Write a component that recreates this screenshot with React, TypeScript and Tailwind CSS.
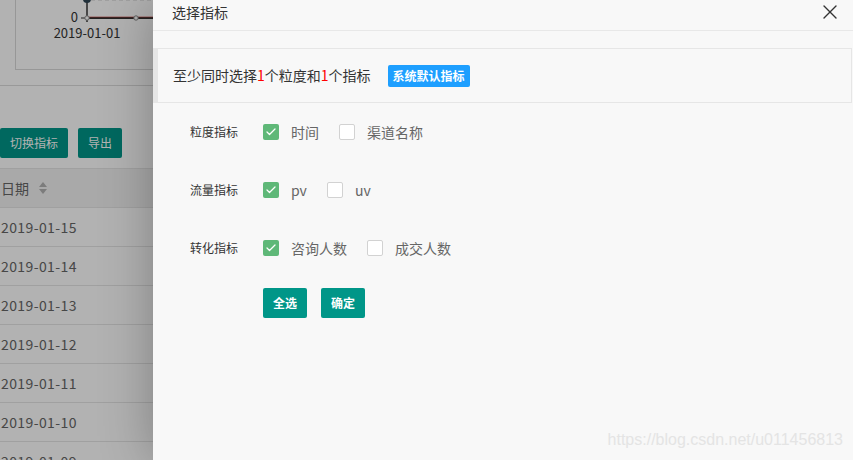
import { Check, X } from "lucide-react";

const rows = ["2019-01-15", "2019-01-14", "2019-01-13", "2019-01-12", "2019-01-11", "2019-01-10", "2019-01-09"];

type Option = { label: string; checked: boolean };

const groups: { title: string; options: Option[] }[] = [
  { title: "粒度指标", options: [{ label: "时间", checked: true }, { label: "渠道名称", checked: false }] },
  { title: "流量指标", options: [{ label: "pv", checked: true }, { label: "uv", checked: false }] },
  { title: "转化指标", options: [{ label: "咨询人数", checked: true }, { label: "成交人数", checked: false }] },
];

function Box({ checked }: { checked: boolean }) {
  return checked ? (
    <span className="flex h-4 w-4 items-center justify-center rounded-[2px] bg-[#5fb878]">
      <Check className="h-3 w-3 text-white" strokeWidth={2.5} />
    </span>
  ) : (
    <span className="h-4 w-4 rounded-[2px] border border-[#d2d2d2] bg-white" />
  );
}

function Page() {
  return (
    <div className="w-[853px] bg-white text-[#666]">
      <div className="h-[86px] border-b border-[#dcdcdc]">
        <div className="ml-[15px] h-[70px] w-[900px] border-l border-b border-[#d9d9d9]">
          <svg width="900" height="69" className="block">
            <line x1="75" y1="0" x2="900" y2="0" stroke="#ccc" strokeDasharray="4 3" />
            <line x1="71" y1="0" x2="71" y2="22" stroke="#333" strokeWidth="1.5" />
            <line x1="65" y1="18" x2="71" y2="18" stroke="#333" />
            <line x1="71" y1="18" x2="900" y2="18" stroke="#333" strokeWidth="2" />
            <line x1="71" y1="17" x2="900" y2="17" stroke="#c23531" strokeWidth="1" opacity="0.6" />
            <circle cx="71" cy="-1" r="4" fill="#2f4554" />
            <circle cx="71" cy="18" r="2.2" fill="#fff" stroke="#888" />
            <circle cx="120" cy="18" r="2.2" fill="#fff" stroke="#888" />
            <text x="62" y="22" fontSize="13" fill="#333" textAnchor="end">0</text>
            <text x="71" y="38" fontSize="13" fill="#333" textAnchor="middle">2019-01-01</text>
            <text x="175" y="38" fontSize="13" fill="#333" textAnchor="middle">2019-01-02</text>
          </svg>
        </div>
      </div>
      <div className="mt-[42px] flex gap-[10px]">
        <button className="h-[30px] rounded-[2px] bg-[#009688] px-[10px] text-[12px] text-white">切换指标</button>
        <button className="h-[30px] rounded-[2px] bg-[#009688] px-[10px] text-[12px] text-white">导出</button>
      </div>
      <div className="mt-[10px] border-t border-[#e6e6e6]">
        <div className="flex h-[39px] items-center gap-[10px] border-b border-[#e6e6e6] bg-[#f2f2f2] pl-px text-[14px] text-[#666]">
          <span>日期</span>
          <span className="flex flex-col gap-[2px]">
            <span className="h-0 w-0 border-x-[4px] border-b-[5px] border-x-transparent border-b-[#b2b2b2]" />
            <span className="h-0 w-0 border-x-[4px] border-t-[5px] border-x-transparent border-t-[#b2b2b2]" />
          </span>
        </div>
        {rows.map((r) => (
          <div key={r} className="flex h-[39px] items-center border-b border-[#e6e6e6] pl-px text-[14px] tracking-[0.4px]">
            {r}
          </div>
        ))}
      </div>
    </div>
  );
}

export default function App() {
  return (
    <div className="relative h-[460px] w-[853px] overflow-hidden bg-white font-['Noto_Sans_CJK_SC',sans-serif]">
      <Page />
      <div className="absolute inset-0 bg-black/30" />
      <div className="absolute inset-y-0 right-0 w-[700px] bg-[#f8f8f8] shadow-[1px_1px_50px_rgba(0,0,0,0.3)]">
        <div className="flex h-[31px] items-start justify-between border-b border-[#e8e8e8] pl-[19px] pr-[11px]">
          <span className="text-[14px] leading-[24px] text-[#333]">选择指标</span>
          <X className="h-[24px] w-[24px] text-[#333]" strokeWidth={1.4} />
        </div>
        <div className="mt-[17px] mr-px flex h-[55px] items-center border border-l-[5px] border-[#e6e6e6] bg-[#f8f8f8] pl-[15px]">
          <span className="text-[14px] text-[#333]">
            至少同时选择<span className="text-[#ff0000]">1</span>个粒度和<span className="text-[#ff0000]">1</span>个指标
          </span>
          <span className="ml-[17px] flex h-[22px] items-center rounded-[2px] bg-[#1e9fff] px-[5px] text-[12px] font-bold text-white">
            系统默认指标
          </span>
        </div>
        <div className="mt-[14px] flex flex-col gap-[28px] pl-[37px]">
          {groups.map((g) => (
            <div key={g.title} className="flex h-[30px] items-center">
              <span className="w-[73px] text-[12px] text-[#333]">{g.title}</span>
              {g.options.map((o) => (
                <span key={o.label} className="mr-[20px] flex items-center">
                  <Box checked={o.checked} />
                  <span className="ml-[12px] text-[14px] text-[#666]">{o.label}</span>
                </span>
              ))}
            </div>
          ))}
        </div>
        <div className="mt-[25px] flex gap-[14px] pl-[110px]">
          <button className="h-[30px] w-[44px] rounded-[2px] bg-[#009688] text-[12px] font-bold text-white">全选</button>
          <button className="h-[30px] w-[44px] rounded-[2px] bg-[#009688] text-[12px] font-bold text-white">确定</button>
        </div>
        <div className="absolute bottom-[8px] right-[10px] font-['Liberation_Sans',sans-serif] text-[16px] text-[#e4e4e4]">
          https://blog.csdn.net/u011456813
        </div>
      </div>
    </div>
  );
}
